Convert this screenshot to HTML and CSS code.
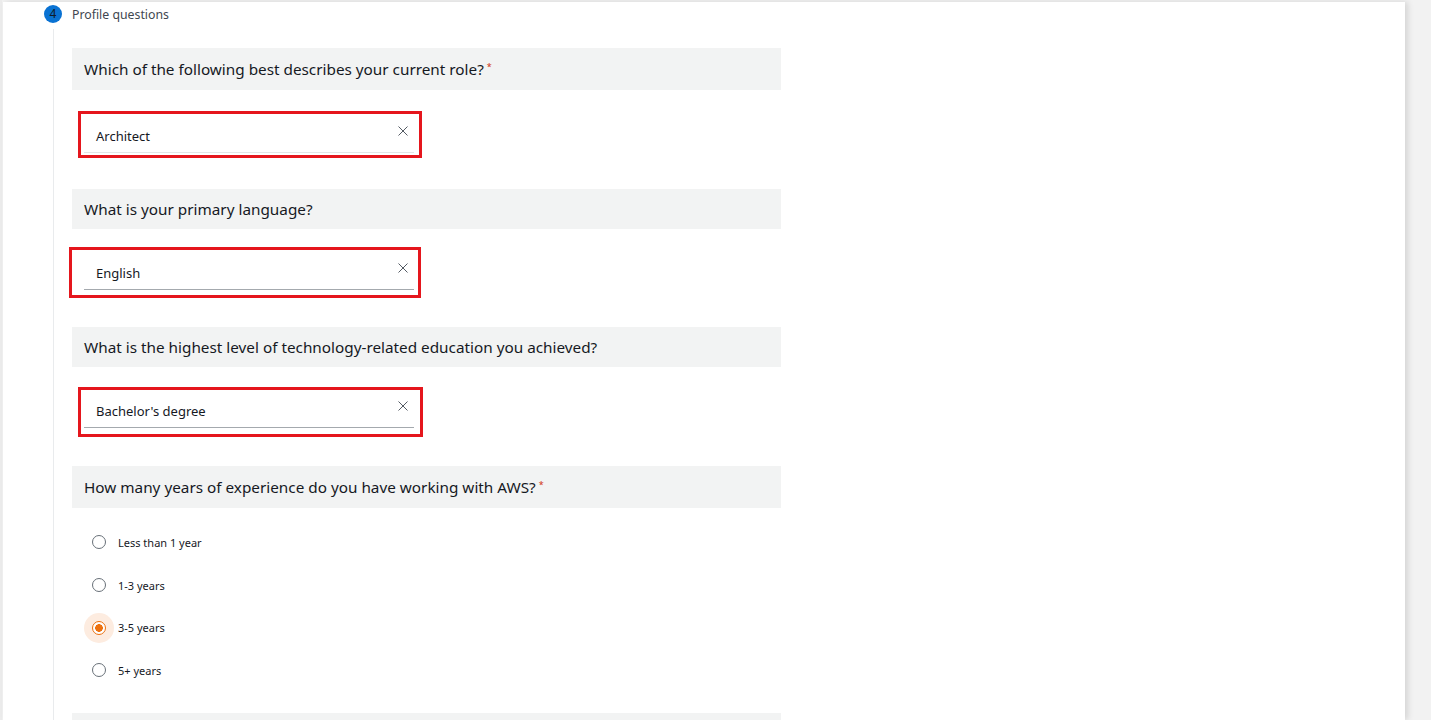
FILE: index.html
```html
<!DOCTYPE html>
<html lang="en">
<head>
<meta charset="utf-8">
<title>Profile questions</title>
<link rel="stylesheet" href="styles.css">
</head>
<body>
<div class="page">
  <div class="card">
    <div class="step">
      <span class="step-num">4</span>
      <span class="step-title">Profile questions</span>
    </div>
    <div class="step-body">
      <div class="q-head q-req">Which of the following best describes your current role?<sup class="req">*</sup></div>
      <div class="mark mark-1">
        <div class="field field-light">
          <span class="field-value">Architect</span>
          <svg class="clear" width="10" height="10" viewBox="0 0 10 10"><path d="M0.5 0.5 L9.5 9.5 M9.5 0.5 L0.5 9.5" stroke="#545b64" stroke-width="1" fill="none"/></svg>
        </div>
      </div>

      <div class="q-head">What is your primary language?</div>
      <div class="mark mark-2">
        <div class="field">
          <span class="field-value">English</span>
          <svg class="clear" width="10" height="10" viewBox="0 0 10 10"><path d="M0.5 0.5 L9.5 9.5 M9.5 0.5 L0.5 9.5" stroke="#545b64" stroke-width="1" fill="none"/></svg>
        </div>
      </div>

      <div class="q-head">What is the highest level of technology-related education you achieved?</div>
      <div class="mark mark-3">
        <div class="field">
          <span class="field-value">Bachelor's degree</span>
          <svg class="clear" width="10" height="10" viewBox="0 0 10 10"><path d="M0.5 0.5 L9.5 9.5 M9.5 0.5 L0.5 9.5" stroke="#545b64" stroke-width="1" fill="none"/></svg>
        </div>
      </div>

      <div class="q-head q-req">How many years of experience do you have working with AWS?<sup class="req">*</sup></div>
      <div class="radios">
        <label class="radio"><span class="halo"><span class="dot"></span></span><span class="radio-label">Less than 1 year</span></label>
        <label class="radio"><span class="halo"><span class="dot"></span></span><span class="radio-label">1-3 years</span></label>
        <label class="radio radio-on"><span class="halo"><span class="dot"></span></span><span class="radio-label">3-5 years</span></label>
        <label class="radio"><span class="halo"><span class="dot"></span></span><span class="radio-label">5+ years</span></label>
      </div>

      <div class="q-head q-req"></div>
    </div>
  </div>
</div>
</body>
</html>
```
FILE: styles.css
```css
html, body {
  margin: 0;
  padding: 0;
  height: 100%;
  overflow: hidden;
}
body {
  background: #f2f2f2;
  font-family: "Noto Sans", "Open Sans", sans-serif;
  color: #16191f;
}
.page {
  height: 100%;
  padding: 2px 0 0 0;
  box-sizing: border-box;
  display: flex;
  border-left: 2px solid #ececec;
  background: #f2f2f2;
}
.card {
  width: 1402px;
  margin-left: 1px;
  background: #ffffff;
  box-shadow: 3px 0 6px rgba(0, 0, 0, 0.12);
  display: flex;
  flex-direction: column;
}
.step {
  display: flex;
  align-items: center;
  height: 18px;
  padding: 3px 0 0 41px;
}
.step-num {
  width: 18px;
  height: 18px;
  border-radius: 50%;
  background: #0972d3;
  color: #0f1b2a;
  font-size: 12px;
  line-height: 18px;
  text-align: center;
}
.step-title {
  margin-left: 10px;
  font-size: 12.3px;
  color: #414750;
}
.step-body {
  margin: 6px 0 0 50px;
  border-left: 1px solid #e9ebed;
  padding: 19px 0 0 18px;
  flex: 1;
}
.q-head {
  width: 697px;
  height: 40px;
  background: #f2f3f3;
  padding-left: 12px;
  display: flex;
  align-items: center;
  font-size: 15.3px;
  color: #16191f;
}
.q-head.q-req {
  height: 42px;
}
.req {
  color: #d13212;
  font-size: 9px;
  margin-left: 3px;
  align-self: flex-start;
  margin-top: 12px;
}
.mark {
  border: 3px solid #e5161d;
  display: inline-block;
}
.mark-1 {
  margin: 21px 0 31px 6px;
  padding: 3px 5px 2px 3px;
}
.mark-2 {
  margin: 18px 0 29px -3px;
  padding: 4px 4px 5px 12px;
}
.mark-3 {
  margin: 20px 0 29px 6px;
  padding: 2px 6px 6px 3px;
}
.field {
  width: 312px;
  height: 35px;
  padding: 0 6px 0 12px;
  border-bottom: 1px solid #a4a9ae;
  display: flex;
  align-items: center;
  justify-content: space-between;
}
.field-light {
  border-bottom-color: #e3e5e7;
}
.field-value {
  font-size: 13px;
  color: #16191f;
  padding-top: 2px;
}
.clear {
  margin-top: -8px;
}
.radios {
  padding: 13px 0 21px 12px;
}
.radio {
  display: flex;
  align-items: center;
  height: 42.7px;
}
.halo {
  width: 30px;
  height: 30px;
  border-radius: 50%;
  display: flex;
  align-items: center;
  justify-content: center;
}
.dot {
  width: 12px;
  height: 12px;
  border: 1.5px solid #687078;
  border-radius: 50%;
  background: #fff;
  box-sizing: content-box;
}
.radio-on .halo {
  background: #fdece0;
}
.radio-on .dot {
  border-color: #ec7211;
  background: radial-gradient(circle, #ec7211 0 3.6px, #ffffff 4px);
}
.radio-label {
  margin-left: 4px;
  font-size: 11px;
  color: #16191f;
}
```
